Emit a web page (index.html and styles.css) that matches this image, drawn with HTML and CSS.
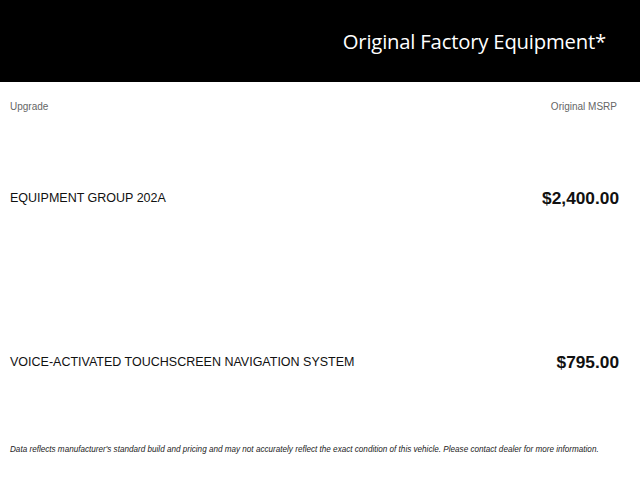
FILE: index.html
```html
<!DOCTYPE html>
<html>
<head>
<meta charset="utf-8">
<link rel="stylesheet" href="styles.css">
</head>
<body>
<header class="hero">
  <h1 class="hero-title">Original Factory Equipment*</h1>
</header>
<main class="content">
  <div class="labels">
    <span>Upgrade</span>
    <span class="label-right">Original MSRP</span>
  </div>
  <div class="item">
    <span class="item-name">EQUIPMENT GROUP 202A</span>
    <span class="item-price">$2,400.00</span>
  </div>
  <div class="item">
    <span class="item-name">VOICE-ACTIVATED TOUCHSCREEN NAVIGATION SYSTEM</span>
    <span class="item-price">$795.00</span>
  </div>
  <p class="note">Data reflects manufacturer's standard build and pricing and may not accurately reflect the exact condition of this vehicle. Please contact dealer for more information.</p>
</main>
</body>
</html>
```
FILE: styles.css
```css
html, body {
  margin: 0;
  padding: 0;
  background: #fff;
}
body {
  width: 640px;
  height: 480px;
  overflow: hidden;
  font-family: "Liberation Sans", Arial, sans-serif;
}
.hero {
  background: #000;
  height: 82px;
  display: flex;
  align-items: center;
  justify-content: flex-end;
  padding-right: 34px;
}
.hero-title {
  margin: 0;
  color: #fff;
  font-family: "Open Sans", sans-serif;
  font-weight: 400;
  font-size: 20.3px;
  letter-spacing: -0.2px;
}
.content {
  padding: 1px 21px 0 10px;
}
.labels {
  display: flex;
  justify-content: space-between;
  height: 33px;
  padding-top: 18px;
  box-sizing: border-box;
  font-size: 10px;
  color: #666;
}
.label-right {
  margin-right: 2px;
}
.item {
  display: flex;
  justify-content: space-between;
  align-items: center;
  height: 164px;
}
.item-name {
  font-size: 12.5px;
  color: #111;
}
.item-price {
  font-size: 17.3px;
  font-weight: 700;
  color: #111;
}
.note {
  margin: 0;
  padding-top: 1px;
  font-size: 8.15px;
  font-style: italic;
  color: #222;
}
```
